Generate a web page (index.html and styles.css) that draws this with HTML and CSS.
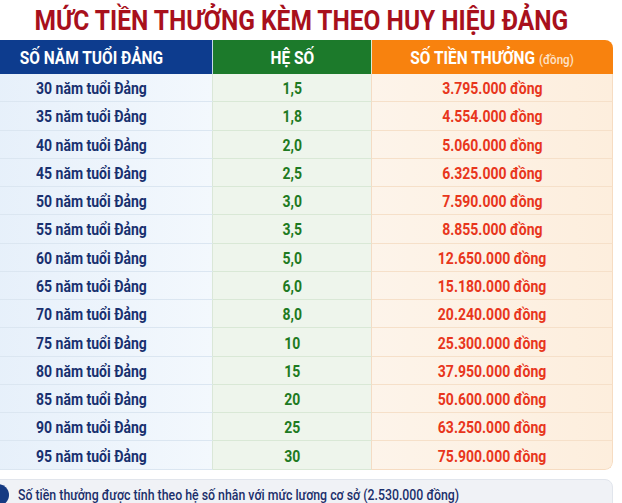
FILE: index.html
```html
<!DOCTYPE html>
<html lang="vi">
<head>
<meta charset="utf-8">
<title>Mức tiền thưởng kèm theo Huy hiệu Đảng</title>
<link rel="stylesheet" href="styles.css">
</head>
<body>
<h1 class="title"><span class="cond">MỨC TIỀN THƯỞNG KÈM THEO HUY HIỆU ĐẢNG</span></h1>
<div class="table">
  <div class="th th-years"><span class="cond">SỐ NĂM TUỔI ĐẢNG</span></div>
  <div class="th th-coef"><span class="cond">HỆ SỐ</span></div>
  <div class="th th-money"><span class="cond">SỐ TIỀN THƯỞNG <small>(đồng)</small></span></div>

  <div class="td years"><span class="cond">30 năm tuổi Đảng</span></div><div class="td coef"><span class="cond">1,5</span></div><div class="td money"><span class="cond">3.795.000 đồng</span></div>
  <div class="td years"><span class="cond">35 năm tuổi Đảng</span></div><div class="td coef"><span class="cond">1,8</span></div><div class="td money"><span class="cond">4.554.000 đồng</span></div>
  <div class="td years"><span class="cond">40 năm tuổi Đảng</span></div><div class="td coef"><span class="cond">2,0</span></div><div class="td money"><span class="cond">5.060.000 đồng</span></div>
  <div class="td years"><span class="cond">45 năm tuổi Đảng</span></div><div class="td coef"><span class="cond">2,5</span></div><div class="td money"><span class="cond">6.325.000 đồng</span></div>
  <div class="td years"><span class="cond">50 năm tuổi Đảng</span></div><div class="td coef"><span class="cond">3,0</span></div><div class="td money"><span class="cond">7.590.000 đồng</span></div>
  <div class="td years"><span class="cond">55 năm tuổi Đảng</span></div><div class="td coef"><span class="cond">3,5</span></div><div class="td money"><span class="cond">8.855.000 đồng</span></div>
  <div class="td years"><span class="cond">60 năm tuổi Đảng</span></div><div class="td coef"><span class="cond">5,0</span></div><div class="td money"><span class="cond">12.650.000 đồng</span></div>
  <div class="td years"><span class="cond">65 năm tuổi Đảng</span></div><div class="td coef"><span class="cond">6,0</span></div><div class="td money"><span class="cond">15.180.000 đồng</span></div>
  <div class="td years"><span class="cond">70 năm tuổi Đảng</span></div><div class="td coef"><span class="cond">8,0</span></div><div class="td money"><span class="cond">20.240.000 đồng</span></div>
  <div class="td years"><span class="cond">75 năm tuổi Đảng</span></div><div class="td coef"><span class="cond">10</span></div><div class="td money"><span class="cond">25.300.000 đồng</span></div>
  <div class="td years"><span class="cond">80 năm tuổi Đảng</span></div><div class="td coef"><span class="cond">15</span></div><div class="td money"><span class="cond">37.950.000 đồng</span></div>
  <div class="td years"><span class="cond">85 năm tuổi Đảng</span></div><div class="td coef"><span class="cond">20</span></div><div class="td money"><span class="cond">50.600.000 đồng</span></div>
  <div class="td years"><span class="cond">90 năm tuổi Đảng</span></div><div class="td coef"><span class="cond">25</span></div><div class="td money"><span class="cond">63.250.000 đồng</span></div>
  <div class="td years last"><span class="cond">95 năm tuổi Đảng</span></div><div class="td coef last"><span class="cond">30</span></div><div class="td money last"><span class="cond">75.900.000 đồng</span></div>
</div>
<div class="note">
  <span class="note-icon"><svg width="22" height="22" viewBox="0 0 22 22"><circle cx="11" cy="11" r="11" fill="#153a82"/><rect x="9.6" y="9" width="2.8" height="8" rx="1" fill="#fff"/><circle cx="11" cy="6" r="1.6" fill="#fff"/></svg></span>
  <span class="note-text"><span class="cond">Số tiền thưởng được tính theo hệ số nhân với mức lương cơ sở (2.530.000 đồng)</span></span>
</div>
</body>
</html>
```
FILE: styles.css
```css
* { box-sizing: border-box; }
html, body { margin: 0; padding: 0; background: #ffffff; overflow: hidden; }
body {
  width: 622px;
  height: 503px;
  font-family: Roboto, "Noto Sans", "Liberation Sans", sans-serif;
}
.cond {
  display: inline-block;
  transform: scaleX(0.86);
  transform-origin: center;
  white-space: nowrap;
}
.title {
  margin: 0;
  height: 40px;
  display: flex;
  align-items: center;
  justify-content: center;
  padding-right: 19px;
  padding-top: 1px;
  font-size: 28.5px;
  font-weight: 700;
  color: #a8101c;
}
.table {
  margin-left: -29px;
  width: 642px;
  display: grid;
  grid-template-columns: 242px 159px 241px;
  grid-template-rows: 34px;
  grid-auto-rows: 28.28px;
  border-bottom-right-radius: 8px;
  overflow: hidden;
}
.th {
  display: flex;
  align-items: center;
  justify-content: center;
  color: #ffffff;
  font-weight: 700;
  font-size: 18px;
}
.th-years { background: #0d3c8e; border-right: 1px solid #c9d9ea; }
.th-coef { background: #1c7a2b; border-right: 1px solid #d9ead6; }
.th-money { background: #f8820e; border-top-right-radius: 8px; }
.th small { font-size: 13.5px; font-weight: 500; color: #fde3c9; }
.td {
  display: flex;
  align-items: center;
  justify-content: center;
  padding-top: 2px;
  font-weight: 700;
  font-size: 16.3px;
  border-bottom: 1px solid #dbe6f1;
}
.years {
  background: linear-gradient(90deg, #e5effa 0%, #f3f8fd 100%);
  color: #18306f;
  border-right: 1px solid #dae7d8;
}
.coef {
  background: #eef5ec;
  color: #1e7a22;
  border-bottom-color: #d9e8d6;
  border-right: 1px solid #f4dcc4;
}
.money {
  background: linear-gradient(90deg, #fdf4ea 0%, #fdeedd 100%);
  color: #e8361c;
  border-bottom-color: #f6e0c9;
  border-right: 1px solid #f6dcc2;
}
.money.last { border-bottom-color: #f6dcc2; border-bottom-right-radius: 8px; }
.note {
  margin-top: 9px;
  margin-left: -14px;
  width: 627px;
  height: 40px;
  background: #f0f2f6;
  border: 1px solid #e1e5ec;
  border-top-right-radius: 8px;
  display: flex;
  align-items: flex-start;
  gap: 9px;
  padding: 4px 0 0 0;
}
.note-icon { display: flex; }
.note-text {
  font-size: 14px;
  font-weight: 500;
  color: #1b2f6b;
  padding-top: 3px;
}
.note-text .cond { transform: scaleX(0.88); transform-origin: left center; }
```
